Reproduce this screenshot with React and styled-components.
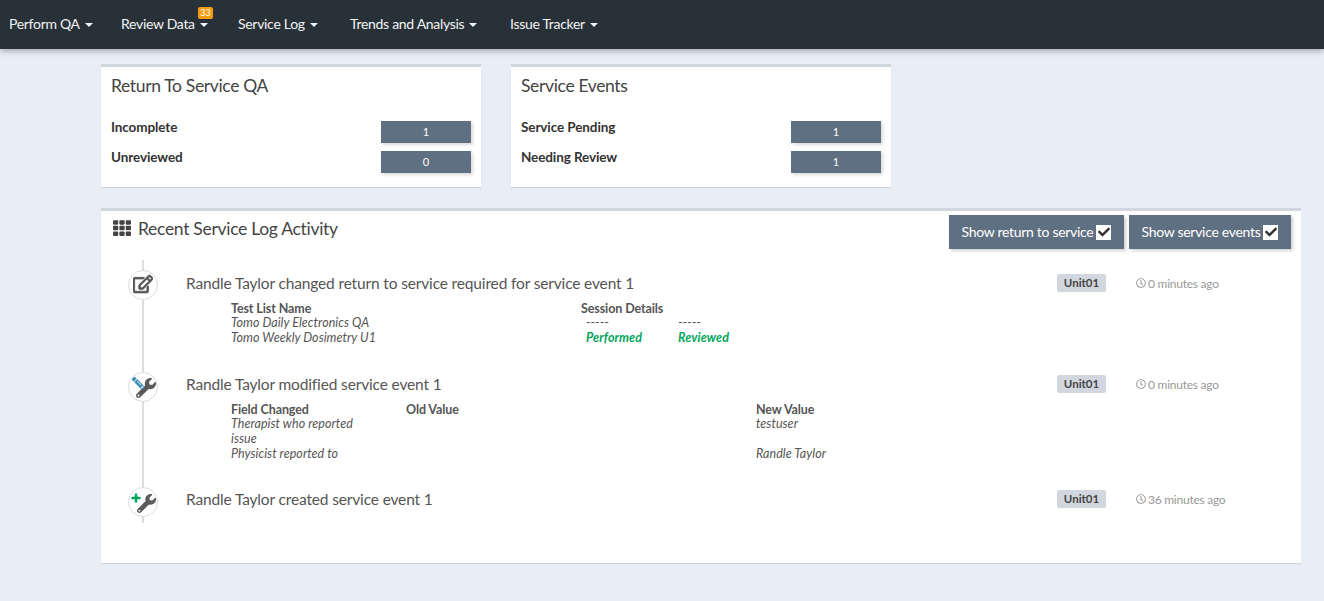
import React from "react";
import styled, { createGlobalStyle } from "styled-components";
import { FaTh, FaRegEdit, FaWrench, FaPlus, FaPencilAlt, FaRegClock, FaCheck } from "react-icons/fa";

const Global = createGlobalStyle`
  html, body { margin: 0; padding: 0; background: #e9edf5; }
  body { font-family: "Lato", "Liberation Sans", sans-serif; font-size: 14px; color: #444; height: 601px; overflow: hidden; }
  * { box-sizing: border-box; }
`;
const NavBar = styled.nav`
  height: 49px; background: #293138; display: flex; align-items: center; padding: 0 0 2px 9px;
  box-shadow: 0 2px 6px rgba(70,80,95,.45); color: #f2f4f5;
`;
const NavItem = styled.div`
  position: relative; width: ${p => p.$w}px; font-size: 14px; letter-spacing: -0.3px; display: flex; align-items: center; white-space: nowrap;
`;
const Caret = styled.span`
  display: inline-block; margin-left: 5px; margin-top: 2px; border-top: 4px solid #f2f4f5; border-left: 4px solid transparent; border-right: 4px solid transparent;
`;
const NavBadge = styled.span`
  position: absolute; left: 77px; top: -8px; width: 15px; height: 12px; background: #f39c12; color: #fff; border-radius: 2px;
  font-size: 9px; line-height: 12px; text-align: center; letter-spacing: 0;
`;
const Main = styled.main`
  padding: 15px 23px 0 101px;
`;
const Cards = styled.div`
  display: flex; gap: 30px; margin-bottom: 21px;
`;
const Card = styled.section`
  width: 380px; height: 123px; background: #fff; border-top: 3px solid #d2d6de; box-shadow: 0 1px 1px rgba(0,0,0,.1); padding: 9px 10px 0;
`;
const CardTitle = styled.h3`
  margin: 0 0 21px; font-size: 17.5px; line-height: 20px; font-weight: 400; color: #444; letter-spacing: -0.35px;
`;
const StatRow = styled.div`
  display: flex; justify-content: space-between; height: 30px;
`;
const StatLabel = styled.span`
  font-weight: 700; font-size: 13.5px; line-height: 20px; color: #333; letter-spacing: -0.1px;
`;
const StatValue = styled.span`
  width: 90px; height: 22px; margin-top: 4px; background: #5f7082; color: #fff; font-size: 11px; line-height: 22px; text-align: center;
  box-shadow: 2px 2px 3px rgba(0,0,0,.15);
`;
const Panel = styled.section`
  height: 355px; background: #fff; border-top: 3px solid #d2d6de; box-shadow: 0 1px 1px rgba(0,0,0,.1); padding: 4px 10px 0 12px;
`;
const PanelHead = styled.header`
  display: flex; justify-content: space-between; height: 34px;
`;
const PanelTitle = styled.h3`
  margin: 0; display: flex; align-items: center; height: 20px; margin-top: 3px; font-size: 17.5px; font-weight: 400; color: #444; letter-spacing: -0.3px;
  svg { margin-right: 7px; font-size: 18px; color: #444; }
`;
const Toggles = styled.div`
  display: flex; gap: 5px;
`;
const Toggle = styled.div`
  width: ${p => p.$w}px; height: 34px; padding-bottom: 1px; background: #5f7082; color: #fff; font-size: 14px; letter-spacing: -0.3px; display: flex; align-items: center; justify-content: center; gap: 3px;
  box-shadow: 2px 2px 3px rgba(0,0,0,.18);
`;
const Check = styled.span`
  width: 15px; height: 15px; margin-top: 1px; background: #fff; display: flex; align-items: center; justify-content: center; color: #333; font-size: 12px;
`;
const Timeline = styled.div`
  position: relative; margin-top: 11px; height: 263px;
  &::before { content: ""; position: absolute; left: 29px; top: 0; bottom: 0; width: 2px; background: #ddd; }
`;
const Entry = styled.article`
  position: relative; display: grid; grid-template-columns: 871px 79px 1fr; align-content: start; padding: 13px 0 0 73px; height: ${p => p.$h}px;
`;
const Badge = styled.span`
  position: absolute; left: 15px; top: ${p => p.$top}px; width: 30px; height: 30px; border-radius: 50%; background: #fff; border: 1px solid #ddd;
`;
const Glyph = styled.span`
  position: absolute; display: block; left: ${p => p.$x}px; top: ${p => p.$y}px; width: ${p => p.$s}px; height: ${p => p.$s}px; color: ${p => p.$c};
  svg { display: block; width: 100%; height: 100%; transform: ${p => p.$flip ? "scaleX(-1)" : "none"}; stroke: currentColor; stroke-width: ${p => p.$bold || 0}; }
`;
const EntryTitle = styled.h4`
  margin: 0; font-size: 15.5px; line-height: 20px; font-weight: 400; color: #555; letter-spacing: -0.15px; white-space: nowrap;
`;
const Unit = styled.span`
  justify-self: start; width: 49px; height: 18px; margin-top: 1px; background: #d2d6de; border-radius: 2px; color: #444; font-size: 11.5px; font-weight: 700; line-height: 18px; text-align: center;
`;
const Time = styled.span`
  display: flex; align-items: center; gap: 2px; height: 20px; font-size: 12px; color: #999; letter-spacing: -0.25px; white-space: nowrap;
  svg { font-size: 10px; }
`;
const Details = styled.div`
  grid-column: 1 / -1; margin: 8.8px 0 0 45px; display: grid; grid-template-columns: ${p => p.$cols}; font-size: 12.5px; line-height: 14.6px; color: #555; letter-spacing: -0.1px;
`;
const Th = styled.div`
  font-weight: 700; color: #555;
`;
const Td = styled.div`
  font-style: italic; padding-right: 35px; letter-spacing: 0.05px;
`;
const Sub = styled.div`
  display: grid; grid-template-columns: 92px 92px; padding-left: 5px; grid-column: 2; grid-row: 2 / span 2;
`;
const Green = styled.b`
  font-style: italic; font-weight: 700; color: #00a65a; letter-spacing: 0.1px;
`;
const Dash = styled.span``;

const items = [["Perform QA", 112], ["Review Data", 117], ["Service Log", 112], ["Trends and Analysis", 160], ["Issue Tracker", 100]];

export default function App() {
  return (
    <>
      <Global />
      <NavBar>
        {items.map(([t, w]) => (
          <NavItem key={t} $w={w}>{t}<Caret />{t === "Review Data" && <NavBadge>33</NavBadge>}</NavItem>
        ))}
      </NavBar>
      <Main>
        <Cards>
          <Card>
            <CardTitle>Return To Service QA</CardTitle>
            <StatRow><StatLabel>Incomplete</StatLabel><StatValue>1</StatValue></StatRow>
            <StatRow><StatLabel>Unreviewed</StatLabel><StatValue>0</StatValue></StatRow>
          </Card>
          <Card>
            <CardTitle>Service Events</CardTitle>
            <StatRow><StatLabel>Service Pending</StatLabel><StatValue>1</StatValue></StatRow>
            <StatRow><StatLabel>Needing Review</StatLabel><StatValue>1</StatValue></StatRow>
          </Card>
        </Cards>
        <Panel>
          <PanelHead>
            <PanelTitle><FaTh />Recent Service Log Activity</PanelTitle>
            <Toggles>
              <Toggle $w={175}>Show return to service<Check><FaCheck /></Check></Toggle>
              <Toggle $w={162}>Show service events<Check><FaCheck /></Check></Toggle>
            </Toggles>
          </PanelHead>
          <Timeline>
            <Entry $h={101}>
              <Badge $top={10}><Glyph $x={4} $y={3} $s={20} $c="#555" $bold={22}><FaRegEdit /></Glyph></Badge>
              <EntryTitle>Randle Taylor changed return to service required for service event 1</EntryTitle>
              <Unit>Unit01</Unit>
              <Time><FaRegClock />0 minutes ago</Time>
              <Details $cols="350px 1fr">
                <Th>Test List Name</Th><Th>Session Details</Th>
                <Td>Tomo Daily Electronics QA</Td>
                <Sub><Dash>-----</Dash><Dash>-----</Dash><Green>Performed</Green><Green>Reviewed</Green></Sub>
                <Td>Tomo Weekly Dosimetry U1</Td>
              </Details>
            </Entry>
            <Entry $h={115}>
              <Badge $top={11}>
                <Glyph $x={7} $y={5} $s={20} $c="#5a5a5a"><FaWrench /></Glyph>
                <Glyph $x={3} $y={4} $s={12} $c="#3c8dbc" $flip><FaPencilAlt /></Glyph>
              </Badge>
              <EntryTitle>Randle Taylor modified service event 1</EntryTitle>
              <Unit>Unit01</Unit>
              <Time><FaRegClock />0 minutes ago</Time>
              <Details $cols="175px 350px 1fr">
                <Th>Field Changed</Th><Th>Old Value</Th><Th>New Value</Th>
                <Td>Therapist who reported issue</Td><Td /><Td>testuser</Td>
                <Td>Physicist reported to</Td><Td /><Td>Randle Taylor</Td>
              </Details>
            </Entry>
            <Entry $h={47}>
              <Badge $top={11}>
                <Glyph $x={8} $y={6} $s={19} $c="#5a5a5a"><FaWrench /></Glyph>
                <Glyph $x={2} $y={5} $s={10} $c="#00a65a" $bold={30}><FaPlus /></Glyph>
              </Badge>
              <EntryTitle>Randle Taylor created service event 1</EntryTitle>
              <Unit>Unit01</Unit>
              <Time><FaRegClock />36 minutes ago</Time>
            </Entry>
          </Timeline>
        </Panel>
      </Main>
    </>
  );
}
